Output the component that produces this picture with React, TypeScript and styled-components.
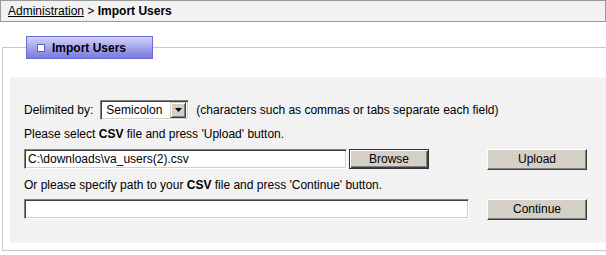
import React from 'react';
import styled, { createGlobalStyle } from 'styled-components';

const GlobalStyle = createGlobalStyle`
  html, body { margin: 0; padding: 0; background: #ffffff; overflow: hidden; }
  body {
    font-family: "Liberation Sans", Arial, sans-serif;
    font-size: 12px;
    color: #000000;
  }
`;

const Page = styled.div`
  width: 606px;
  height: 255px;
  overflow: hidden;
`;

const Breadcrumb = styled.div`
  box-sizing: border-box;
  width: 606px;
  height: 22px;
  border: 1px solid #999999;
  background: #f2f2f2;
  padding-left: 7px;
  display: flex;
  align-items: center;
  white-space: pre;
`;

const CrumbLink = styled.a`
  color: #000000;
  text-decoration: underline;
  cursor: pointer;
`;

const Current = styled.b`
  font-weight: bold;
`;

const Frame = styled.fieldset`
  box-sizing: border-box;
  margin: 14px 0 0 2px;
  padding: 18px 7px 7px 7px;
  width: 620px;
  height: 215px;
  border: 1px solid #c8c8c8;
  min-inline-size: auto;
`;

const Legend = styled.legend`
  padding: 0;
  margin-left: 16px;
`;

const Tab = styled.div`
  box-sizing: border-box;
  width: 127px;
  height: 23px;
  border: 1px solid #6a6ad2;
  background: linear-gradient(to bottom, #d2d2fa 0%, #a9a9f0 45%, #8585e3 85%, #7c7cdf 100%);
  display: flex;
  align-items: center;
  padding-left: 10px;
  gap: 7px;
  font-weight: bold;
  color: #000000;
`;

const TabMark = styled.span`
  box-sizing: border-box;
  width: 8px;
  height: 8px;
  border: 1px solid #5c5cc8;
  background: #ffffff;
`;

const Panel = styled.div`
  box-sizing: border-box;
  height: 166px;
  background: #f2f2f2;
  padding: 23px 0 0 14px;
  display: flex;
  flex-direction: column;
`;

const Row = styled.div<{ $top?: number }>`
  display: flex;
  align-items: center;
  height: 20px;
  margin-top: ${(p) => p.$top ?? 0}px;
`;

const Line = styled.div<{ $top: number }>`
  height: 16px;
  line-height: 16px;
  margin-top: ${(p) => p.$top}px;
  white-space: pre;
`;

const Label = styled.span`
  white-space: pre;
`;

const Select = styled.div`
  box-sizing: border-box;
  width: 89px;
  height: 20px;
  margin: 0 7px 0 7px;
  display: flex;
  align-items: center;
  background: #ffffff;
  border-top: 1px solid #808080;
  border-left: 1px solid #808080;
  border-bottom: 1px solid #ffffff;
  border-right: 1px solid #ffffff;
  box-shadow: inset 1px 1px 0 #404040, inset -1px -1px 0 #d4d0c8;
  padding: 0 2px 0 5px;
`;

const SelectValue = styled.span`
  flex: 1;
`;

const SelectArrow = styled.span`
  box-sizing: border-box;
  width: 16px;
  height: 16px;
  background: #d4d0c8;
  border-top: 1px solid #d4d0c8;
  border-left: 1px solid #d4d0c8;
  border-bottom: 1px solid #404040;
  border-right: 1px solid #404040;
  box-shadow: inset 1px 1px 0 #ffffff, inset -1px -1px 0 #808080;
  display: flex;
  align-items: center;
  justify-content: center;
`;

const TextBox = styled.div<{ $width: number }>`
  box-sizing: border-box;
  width: ${(p) => p.$width}px;
  height: 20px;
  background: #ffffff;
  border-top: 1px solid #808080;
  border-left: 1px solid #808080;
  border-bottom: 1px solid #ffffff;
  border-right: 1px solid #ffffff;
  box-shadow: inset 1px 1px 0 #404040, inset -1px -1px 0 #d4d0c8;
  padding: 0 3px;
  display: flex;
  align-items: center;
  white-space: pre;
`;

const LeftCell = styled.div`
  width: 445px;
  display: flex;
  align-items: center;
  gap: 2px;
`;

const BrowseButton = styled.button`
  box-sizing: border-box;
  width: 80px;
  height: 20px;
  padding: 0;
  font: inherit;
  color: #000000;
  background: #d4d0c8;
  border: 1px solid #303030;
  box-shadow: inset 1px 1px 0 #ffffff, inset -1px -1px 0 #404040, inset -2px -2px 0 #808080;
`;

const ActionButton = styled.button`
  box-sizing: border-box;
  width: 100px;
  height: 21px;
  margin-left: 18px;
  padding: 0;
  font: inherit;
  color: #000000;
  background: #d4d0c8;
  border-style: solid;
  border-width: 1px;
  border-color: #ffffff #404040 #404040 #ffffff;
  box-shadow: inset -1px -1px 0 #808080;
`;

export default function App() {
  return (
    <Page>
      <GlobalStyle />
      <Breadcrumb>
        <CrumbLink>Administration</CrumbLink>
        {' > '}
        <Current>Import Users</Current>
      </Breadcrumb>
      <Frame>
        <Legend>
          <Tab>
            <TabMark />
            Import Users
          </Tab>
        </Legend>
        <Panel>
          <Row>
            <Label>Delimited by:</Label>
            <Select>
              <SelectValue>Semicolon</SelectValue>
              <SelectArrow>
                <svg width="7" height="4" viewBox="0 0 7 4">
                  <path d="M0 0H7L3.5 4Z" fill="#000" />
                </svg>
              </SelectArrow>
            </Select>
            <Label>(characters such as commas or tabs separate each field)</Label>
          </Row>
          <Line $top={6}>
            Please select <b>CSV</b> file and press 'Upload' button.
          </Line>
          <Row $top={7}>
            <LeftCell>
              <TextBox $width={323}>C:\downloads\va_users(2).csv</TextBox>
              <BrowseButton>Browse</BrowseButton>
            </LeftCell>
            <ActionButton>Upload</ActionButton>
          </Row>
          <Line $top={8}>
            Or please specify path to your <b>CSV</b> file and press 'Continue' button.
          </Line>
          <Row $top={6}>
            <LeftCell>
              <TextBox $width={445} />
            </LeftCell>
            <ActionButton>Continue</ActionButton>
          </Row>
        </Panel>
      </Frame>
    </Page>
  );
}
